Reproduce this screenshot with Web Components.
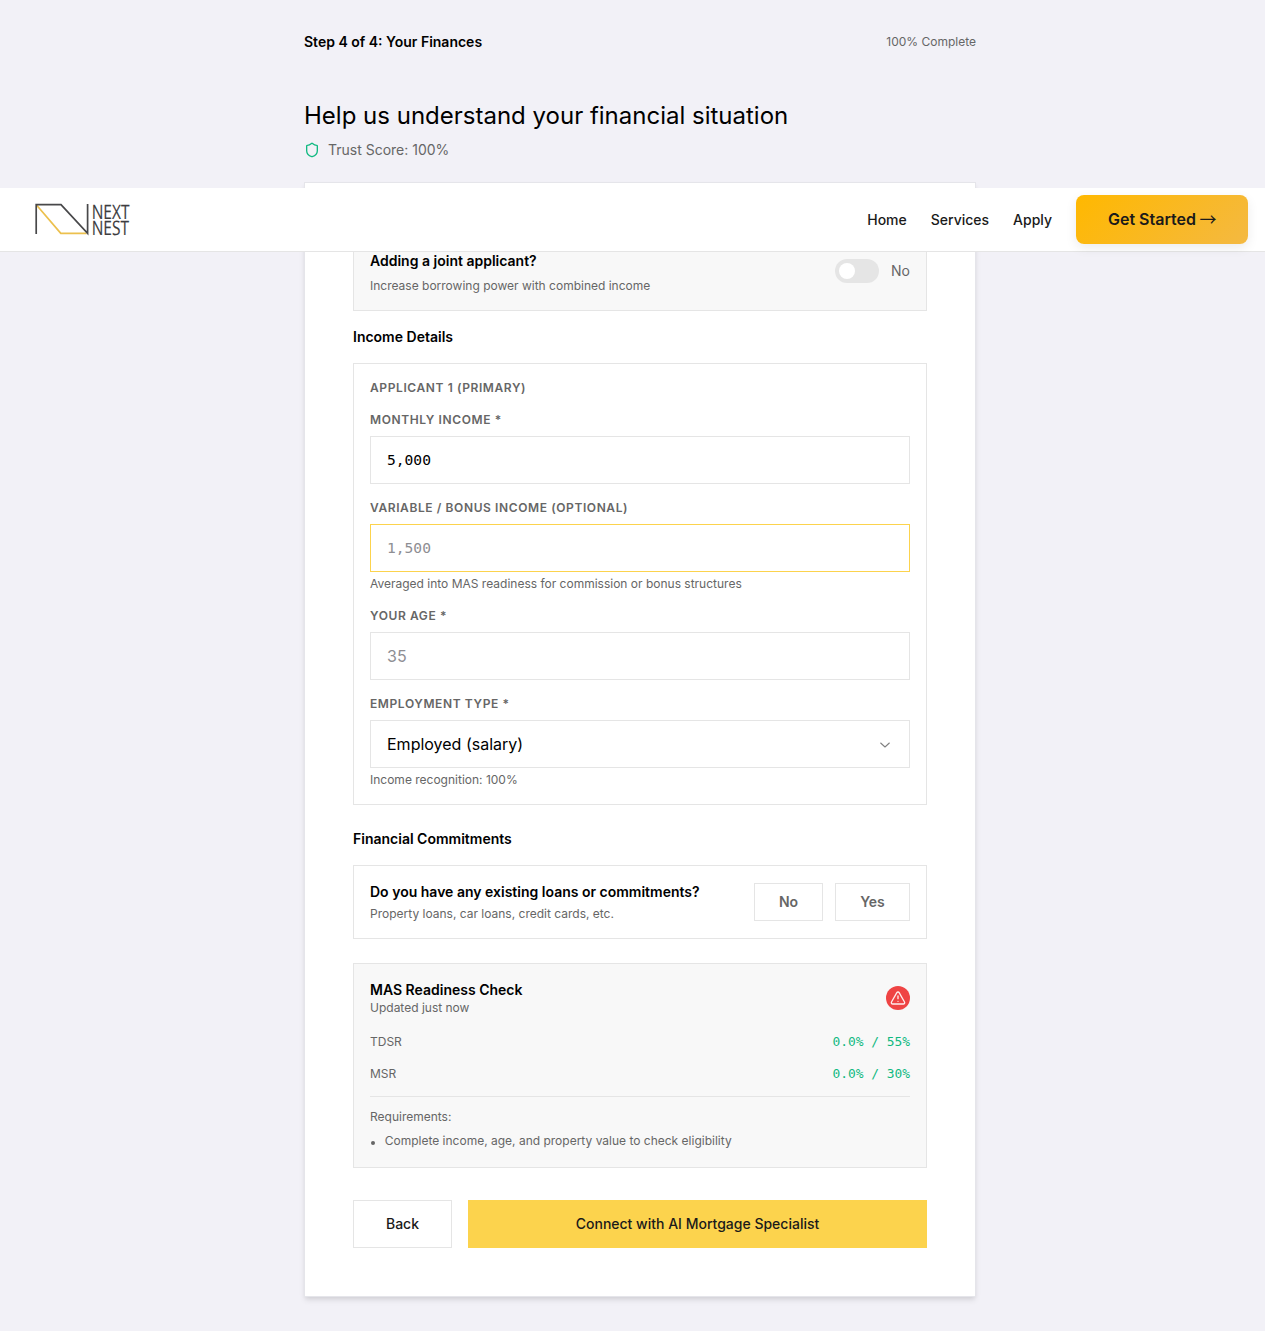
<!DOCTYPE html>
<html lang="en">
<head>
<meta charset="utf-8">
<title>NextNest</title>
<style>
html,body{margin:0;padding:0}
body{font-family:Inter,"Liberation Sans",sans-serif;background:#f2f1f7;color:#000;overflow:hidden}
</style>
</head>
<body>
<nn-app></nn-app>
<script>
const define = (name, css, html) => {
  customElements.define(name, class extends HTMLElement {
    constructor() {
      super();
      const markup = typeof html === 'function' ? html(this) : html;
      this.attachShadow({mode: 'open'}).innerHTML =
        `<style>*{box-sizing:border-box}:host{display:block;box-sizing:border-box}${css}</style>${markup}`;
    }
  });
};

define('nn-logo', `:host{width:96px;height:35px}svg{display:block;overflow:visible}text{font-family:"Open Sans",sans-serif;font-size:20px;fill:#3d3d3f;stroke:#3d3d3f;stroke-width:.15px;text-rendering:geometricPrecision}`,
`<svg width="96" height="35" viewBox="0 0 96 35" fill="none">
  <path d="M2.500 3 26.800 31.300H52.500" stroke="#ecc04d" stroke-width="1.700"/>
  <path d="M2.200 32V2.600H27L53.600 31.300V2" stroke="#48484a" stroke-width="1.700"/>
  <text><tspan x="57.700" y="16.700" textLength="37.800" lengthAdjust="spacingAndGlyphs">NEXT</tspan><tspan x="57.700" y="33" textLength="37.300" lengthAdjust="spacingAndGlyphs">NEST</tspan></text>
</svg>`);

define('nn-header', `
:host{position:absolute;left:0;top:188px;width:1265px;height:64px;background:#fff;border-bottom:1px solid #e5e5e5;
display:flex;align-items:center;justify-content:space-between;padding:0 17px 0 34px}
nav{display:flex;align-items:center;gap:24px;font-size:14px;font-weight:500;line-height:20px;color:#1a1a1a}
.cta{width:172px;height:49px;border-radius:8px;background:linear-gradient(135deg,#ffb800,#f4b942);font-size:16px;font-weight:600;line-height:24px;
display:flex;align-items:center;justify-content:center;box-shadow:0 4px 12px rgba(0,0,0,.08);white-space:pre;padding-bottom:1px}
.arrow{font-family:"Noto Sans CJK SC",sans-serif;font-weight:400;font-size:17px;line-height:24px;width:16px;display:flex;justify-content:center}`,
`<nn-logo></nn-logo><nav><span>Home</span><span>Services</span><span>Apply</span><span class="cta"><span>Get Started </span><span class="arrow">→</span></span></nav>`);

define('nn-progress', `:host{display:flex;justify-content:space-between;align-items:center;height:20px}
.step{font-size:14px;font-weight:600;line-height:20px}.done{font-size:12px;line-height:16px;color:#666}`,
`<span class="step"><slot></slot></span><span class="done"><slot name="done"></slot></span>`);

define('nn-trust', `:host{display:flex;align-items:center;gap:8px;font-size:14px;line-height:20px;color:#666}`,
`<svg width="16" height="16" viewBox="0 0 24 24" fill="none" stroke="#10b981" stroke-width="2" stroke-linecap="round" stroke-linejoin="round"><path d="M20 13c0 5-3.500 7.500-7.660 8.950a1 1 0 0 1-.67-.01C7.500 20.500 4 18 4 13V6a1 1 0 0 1 1-1c2 0 4.500-1.200 6.240-2.720a1.170 1.170 0 0 1 1.520 0C14.510 3.810 17 5 19 5a1 1 0 0 1 1 1z"/></svg><slot></slot>`);

define('nn-card', `:host{background:#fff;border:1px solid #e5e5ea;padding:48px;height:1115px;box-shadow:0 4px 6px -1px rgba(0,0,0,.1),0 2px 4px -1px rgba(0,0,0,.06)}`, `<slot></slot>`);

define('nn-panel', `:host{border:1px solid #e5e5e5;padding:16px}:host([tone=soft]){background:#f8f8f8}`, `<slot></slot>`);

define('nn-heading', `:host{font-size:14px;font-weight:600;line-height:20px}`, `<slot></slot>`);

define('nn-toggle', `:host{display:flex;align-items:center;gap:12px;font-size:14px;line-height:20px;color:#666}
.track{width:44px;height:24px;border-radius:12px;background:#e5e5e5;padding:4px}
.thumb{width:16px;height:16px;border-radius:8px;background:#fff}`,
`<div class="track"><div class="thumb"></div></div><slot></slot>`);

define('nn-joint', `:host{display:flex;justify-content:space-between;align-items:center;height:46px}
.t{font-size:14px;font-weight:600;line-height:20px;padding-top:3px}.s{font-size:12px;line-height:16px;color:#666;margin-top:7px}`,
`<div><div class="t">Adding a joint applicant?</div><div class="s">Increase borrowing power with combined income</div></div><nn-toggle>No</nn-toggle>`);

define('nn-field', `:host{margin-top:16px}
.label{font-size:12px;font-weight:600;line-height:16px;letter-spacing:.6px;color:#666;text-transform:uppercase}
.box{margin-top:8px;height:48px;border:1px solid #e5e5e5;background:#fff;padding:0 16px;font-size:16px;display:flex;align-items:center;justify-content:space-between}
:host([empty]) .box{color:#8e8e93}:host([focused]) .box{border-color:#fcd34d}
:host([mono]) .box{font-family:"DejaVu Sans Mono",monospace;font-size:14.6px;padding-bottom:2px}
svg{margin-top:1px}
.help{font-size:12px;line-height:16px;color:#666;margin-top:4px}`,
el => `<div class="label">${el.getAttribute('label')}</div><div class="box"><slot></slot>${el.hasAttribute('select') ? '<svg width="16" height="16" viewBox="0 0 24 24" fill="none" stroke="#808080" stroke-width="1.6" stroke-linecap="round" stroke-linejoin="round"><path d="m5.500 9 6.500 6 6.500-6"/></svg>' : ''}</div>${el.hasAttribute('help') ? `<div class="help">${el.getAttribute('help')}</div>` : ''}`);

define('nn-button', `:host{display:flex;align-items:center;justify-content:center;height:48px;font-size:14px;line-height:20px;font-weight:500;border:1px solid #e5e5e5;background:#fff;color:#1a1a1a}
:host([kind=choice]){height:38px;color:#666;font-weight:600}
:host([kind=primary]){background:#fcd34d;border:0}`, `<slot></slot>`);

define('nn-commitments', `:host{display:flex;justify-content:space-between;align-items:center;height:40px}
.t{font-size:14px;font-weight:600;line-height:20px}.s{font-size:12px;line-height:16px;color:#666;margin-top:4px}
.b{display:flex;gap:12px}.n{width:69px}.y{width:75px}`,
`<div><div class="t">Do you have any existing loans or commitments?</div><div class="s">Property loans, car loans, credit cards, etc.</div></div>
<div class="b"><nn-button kind="choice" class="n">No</nn-button><nn-button kind="choice" class="y">Yes</nn-button></div>`);

define('nn-readiness', `:host{height:171px;font-size:12px;line-height:16px;color:#666}
.head,.row{display:flex;justify-content:space-between;align-items:center}
.t{font-size:14px;font-weight:600;line-height:20px;color:#000}
.icon{width:24px;height:24px;border-radius:12px;background:#ef4444;display:flex;align-items:center;justify-content:center}
.row{height:20px;margin-top:12px}.head+.row{margin-top:16px}
.v{font-family:"DejaVu Sans Mono",monospace;font-size:12.9px;color:#10b981}
.req{border-top:1px solid #e5e5e5;margin-top:12px;padding-top:12px}
.li{display:flex;gap:8px;margin-top:8px}.dot{width:6.700px;padding:8px 0 0 1.300px}
.dot i{display:block;width:4px;height:4px;border-radius:2px;background:#666}`,
`<div class="head"><div><div class="t">MAS Readiness Check</div><div>Updated just now</div></div>
<div class="icon"><svg width="16" height="16" viewBox="0 0 24 24" fill="none" stroke="#fff" stroke-opacity=".9" stroke-width="2" stroke-linecap="round" stroke-linejoin="round"><path d="m21.730 18-8-14a2 2 0 0 0-3.480 0l-8 14A2 2 0 0 0 4 21h16a2 2 0 0 0 1.730-3"/><path d="M12 9v4"/><path d="M12 17h.01"/></svg></div></div>
<div class="row"><span>TDSR</span><span class="v">0.0% / 55%</span></div>
<div class="row"><span>MSR</span><span class="v">0.0% / 30%</span></div>
<div class="req"><div>Requirements:</div><div class="li"><div class="dot"><i></i></div><span>Complete income, age, and property value to check eligibility</span></div></div>`);

define('nn-app', `:host{height:1331px;padding:32px 0 0 304px}
main{width:672px}h2{font-size:24px;font-weight:400;line-height:32px;margin:48px 0 8px}
nn-card{margin-top:22px}.h1{margin:16px 0}.h2{margin:24px 0 16px}.cm{margin-bottom:24px}
.ap{font-size:12px;font-weight:600;line-height:16px;letter-spacing:.6px;color:#666}
.actions{display:flex;gap:16px;margin-top:32px}.back{width:99px}.next{flex:1}`,
`<main>
<nn-progress>Step 4 of 4: Your Finances<span slot="done">100% Complete</span></nn-progress>
<h2>Help us understand your financial situation</h2>
<nn-trust>Trust Score: 100%</nn-trust>
<nn-card>
<nn-panel tone="soft"><nn-joint></nn-joint></nn-panel>
<nn-heading class="h1">Income Details</nn-heading>
<nn-panel>
<div class="ap">APPLICANT 1 (PRIMARY)</div>
<nn-field label="Monthly Income *" mono>5,000</nn-field>
<nn-field label="Variable / Bonus Income (Optional)" mono empty focused help="Averaged into MAS readiness for commission or bonus structures">1,500</nn-field>
<nn-field label="Your Age *" empty>35</nn-field>
<nn-field label="Employment Type *" select help="Income recognition: 100%">Employed (salary)</nn-field>
</nn-panel>
<nn-heading class="h2">Financial Commitments</nn-heading>
<nn-panel class="cm"><nn-commitments></nn-commitments></nn-panel>
<nn-panel tone="soft"><nn-readiness></nn-readiness></nn-panel>
<div class="actions"><nn-button class="back">Back</nn-button><nn-button class="next" kind="primary">Connect with AI Mortgage Specialist</nn-button></div>
</nn-card>
</main>
<nn-header></nn-header>`);
</script>
</body>
</html>
